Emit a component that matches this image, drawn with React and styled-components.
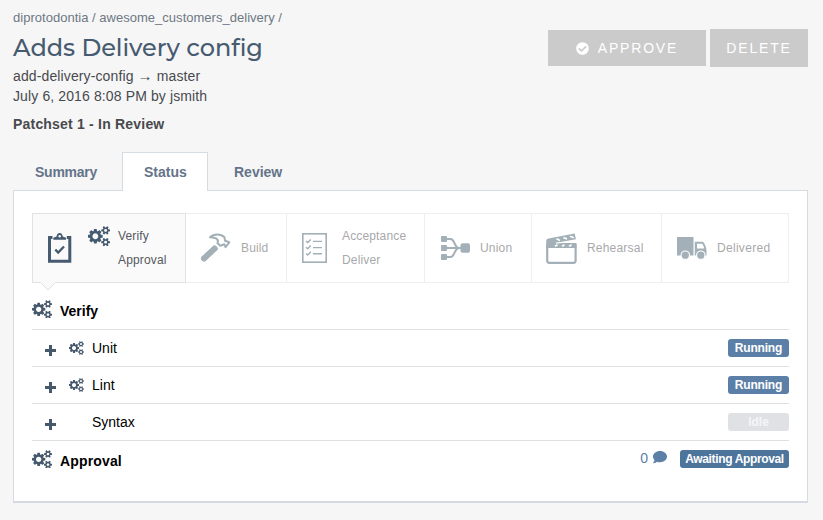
import React from "react";
import styled, { createGlobalStyle } from "styled-components";
import { FaCheckCircle, FaComment } from "react-icons/fa";

const GlobalStyle = createGlobalStyle`
  * { box-sizing: border-box; }
  body {
    margin: 0;
    background: #f6f6f6;
    color: #484a4e;
    font: 14px/20px "Liberation Sans", Arial, sans-serif;
  }
  svg { display: block; flex: none; }
`;

const Page = styled.div`
  width: 823px;
  height: 520px;
  padding: 8px 15px 0 13px;
  overflow: hidden;
`;

const Header = styled.header`
  display: flex;
  justify-content: space-between;
  align-items: flex-start;
  height: 144px;
`;

const Breadcrumb = styled.div`
  font-size: 13px;
  line-height: 19px;
  letter-spacing: 0.02px;
  color: #6e7884;
`;

const Title = styled.h1`
  margin: 6px 0 3px;
  font: 500 24px/30px Montserrat, Inter, sans-serif;
  letter-spacing: -0.05px;
  white-space: nowrap;
  color: #465a70;
`;

const Meta = styled.div`
  line-height: 20px;
  letter-spacing: 0.12px;
`;

const Arrow = styled.span`
  font: 15px/14px "Liberation Serif", serif;
`;

const Patchset = styled.div`
  margin-top: 8px;
  font-weight: bold;
  letter-spacing: 0.2px;
`;

const Actions = styled.div`
  display: flex;
  align-items: center;
  gap: 4px;
  margin-top: 21px;
`;

const Button = styled.button`
  display: flex;
  align-items: center;
  justify-content: center;
  gap: 9px;
  width: ${(p) => p.$width}px;
  height: ${(p) => p.$height}px;
  padding: 0;
  border: 0;
  background: #cbcbcb;
  color: #fff;
  font: 14px "Liberation Sans", Arial, sans-serif;
  letter-spacing: 1.8px;
`;

const Tabs = styled.nav`
  display: flex;
  position: relative;
  height: 39px;
  margin-bottom: -1px;
`;

const Tab = styled.a`
  display: flex;
  width: ${(p) => p.$width}px;
  padding: 9px 0 0 ${(p) => p.$inset || 21}px;
  border: 1px solid ${(p) => (p.$active ? "#d5dce2" : "transparent")};
  border-bottom: 0;
  background: ${(p) => (p.$active ? "#fff" : "transparent")};
  color: #64748a;
  font-weight: bold;
  letter-spacing: ${(p) => p.$spacing || 0}px;
`;

const Panel = styled.main`
  height: 313px;
  padding: 22px 18px 0;
  border: 1px solid #d5dce2;
  border-bottom: 2px solid #d5dae2;
  background: #fff;
`;

const Pipeline = styled.div`
  display: flex;
  height: 70px;
`;

const Stage = styled.div`
  position: relative;
  display: flex;
  align-items: center;
  width: ${(p) => p.$width}px;
  padding-left: ${(p) => p.$inset}px;
  border: 1px solid ${(p) => (p.$active ? "#dfe3e6" : "#eeeeef")};
  border-left-width: ${(p) => (p.$active ? 1 : 0)}px;
  background: ${(p) => (p.$active ? "#fafafa" : "#fff")};
  color: ${(p) => (p.$active ? "#465a70" : "#a3b0b8")};
`;

const Caret = styled.svg`
  position: absolute;
  left: 7px;
  top: 68px;
`;

const StageLabels = styled.div`
  margin-left: ${(p) => p.$gap}px;
  font-size: 12px;
  line-height: 24px;
  letter-spacing: ${(p) => p.$spacing || 0.15}px;
  color: ${(p) => (p.$active ? "#55585e" : "#a8a9ab")};
`;

const StageGears = styled.div`
  margin: 0 0 24px 16px;
`;

const Row = styled.div`
  display: flex;
  align-items: center;
  height: ${(p) => p.$height || 37}px;
  padding-left: ${(p) => (p.$heading ? 0 : 13)}px;
  border-bottom: 1px solid ${(p) => (p.$last ? "transparent" : "#dfe0e2")};
  color: #46586c;
`;

const IconSlot = styled.span`
  display: flex;
  width: ${(p) => p.$width}px;
  margin-top: ${(p) => p.$drop || 0}px;
`;

const RowName = styled.span`
  flex: 1;
  margin-top: ${(p) => p.$drop || 0}px;
  color: #000;
  font-weight: ${(p) => (p.$bold ? "bold" : "normal")};
  letter-spacing: ${(p) => p.$spacing || 0}px;
`;

const Comments = styled.span`
  display: flex;
  align-items: center;
  gap: 5px;
  margin: -2px 13px 0 0;
  color: #5c7fa7;
`;

const CommentBubble = styled(FaComment)`
  margin-top: -2px;
`;

const Badge = styled.span`
  width: ${(p) => p.$width}px;
  height: 18px;
  border-radius: 3px;
  background: ${(p) => p.$tone};
  color: ${(p) => p.$ink || "#fff"};
  font: bold 12px/18px "Liberation Sans", Arial, sans-serif;
  letter-spacing: ${(p) => p.$spacing}px;
  text-align: center;
  white-space: nowrap;
`;

const GearsIcon = ({ size }) => (
  <svg width={size} height={(size * 1792) / 1920} viewBox="0 0 1920 1792" fill="currentColor" fillRule="evenodd">
    <path d="M896 896q0-106-75-181t-181-75-181 75-75 181 75 181 181 75 181-75 75-181zm768 512q0-52-38-90t-90-38-90 38-38 90q0 53 37.500 90.500t90.500 37.500 90.500-37.500 37.500-90.500zm0-1024q0-52-38-90t-90-38-90 38-38 90q0 53 37.500 90.500t90.500 37.500 90.500-37.500 37.500-90.500zm-384 421v185q0 10-7 19.500t-16 10.500l-155 24q-11 35-32 76 34 48 90 115 7 11 7 20 0 12-7 19-23 30-82.500 89.500t-78.500 59.500q-11 0-21-7l-115-90q-37 19-77 31-11 108-23 155-7 24-30 24h-186q-11 0-20-7.500t-10-17.500l-23-153q-34-10-75-31l-118 89q-7 7-20 7-11 0-21-8-144-133-144-160 0-9 7-19 10-14 41-53t47-61q-23-44-35-82l-152-24q-10-1-17-9.500t-7-19.500v-185q0-10 7-19.500t16-10.500l155-24q11-35 32-76-34-48-90-115-7-11-7-20 0-12 7-20 22-30 82-89t79-59q11 0 21 7l115 90q34-18 77-32 11-108 23-154 7-24 30-24h186q11 0 20 7.500t10 17.500l23 153q34 10 75 31l118-89q8-7 20-7 11 0 21 8 144 133 144 160 0 8-7 19-12 16-42 54t-45 60q23 48 34 82l152 23q10 2 17 10.500t7 19.500zm640 533v140q0 16-149 31-12 27-30 52 51 113 51 138 0 4-4 7-122 71-124 71-8 0-46-47t-52-68q-20 2-30 2t-30-2q-14 21-52 68t-46 47q-2 0-124-71-4-3-4-7 0-25 51-138-18-25-30-52-149-15-149-31v-140q0-16 149-31 13-29 30-52-51-113-51-138 0-4 4-7 4-2 35-20t59-34 30-16q8 0 46 46.500t52 67.500q20-2 30-2t30 2q51-71 92-112l6-2q4 0 124 70 4 3 4 7 0 25-51 138 17 23 30 52 149 15 149 31zm0-1024v140q0 16-149 31-12 27-30 52 51 113 51 138 0 4-4 7-122 71-124 71-8 0-46-47t-52-68q-20 2-30 2t-30-2q-14 21-52 68t-46 47q-2 0-124-71-4-3-4-7 0-25 51-138-18-25-30-52-149-15-149-31v-140q0-16 149-31 13-29 30-52-51-113-51-138 0-4 4-7 4-2 35-20t59-34 30-16q8 0 46 46.500t52 67.500q20-2 30-2t30 2q51-71 92-112l6-2q4 0 124 70 4 3 4 7 0 25-51 138 17 23 30 52 149 15 149 31z" />
  </svg>
);

const PlusIcon = () => (
  <svg width="11" height="11" viewBox="0 0 11 11" fill="none" stroke="currentColor" strokeWidth="3">
    <path d="M5.500 0V11M0 5.500H11" />
  </svg>
);

const ClipboardIcon = () => (
  <svg width="24" height="30" viewBox="0 0 24 30" fill="none" stroke="currentColor">
    <path d="M4.500 4.600H1.500V28.300H21.800V4.600H18.800" strokeWidth="3" />
    <path d="M5.300 6.800V4.800L8.500 3.600C9 1 10 0 11.700 0S14.200 1 14.800 3.600L18 4.800V6.800Z" fill="currentColor" stroke="none" />
    <circle cx="11.700" cy="3.200" r="1.200" fill="#fafafa" stroke="none" />
    <path d="M7.300 16.700L10.200 19.500L16 13.500" strokeWidth="2.300" />
  </svg>
);

const HammerIcon = () => (
  <svg width="31" height="30" viewBox="0 0 31 30" fill="none" stroke="currentColor">
    <path d="M4 25.500L14.500 15.600" strokeWidth="6" strokeLinecap="round" />
    <path d="M13.500 12.800L17.400 16.600" strokeWidth="2.500" />
    <path d="M10 4.300C14 .4 21 .6 24.500 4.200L25 7.800L29.300 9.300L25.500 14.200L24.300 11.200L20.300 12.800L17.400 10.100C19 7.500 17.500 4.500 10 4.300Z" strokeWidth="2" strokeLinejoin="round" />
  </svg>
);

const ChecklistIcon = () => (
  <svg width="25" height="30" viewBox="0 0 25 30" fill="none" stroke="currentColor">
    <rect x=".8" y=".8" width="23.400" height="28.400" strokeWidth="1.600" />
    <path d="M4 8L5.700 9.600L8.800 6.400M4 14.200L5.700 15.800L8.800 12.600M4 20.400L5.700 22L8.800 18.800M11 8.400H20M11 14.600H20M11 20.800H20" strokeWidth="1.400" />
  </svg>
);

const MergeIcon = () => (
  <svg width="29" height="24" viewBox="0 0 29 24" fill="currentColor">
    <path d="M4 3H9.500C14 3 13 11 17.500 12H22M4 12H20M4 21H9.500C14 21 13 13 17.500 12" fill="none" stroke="currentColor" strokeWidth="2" />
    <rect width="6" height="6" rx=".8" />
    <rect y="9" width="6" height="6" rx=".8" />
    <rect y="18" width="6" height="6" rx=".8" />
    <rect x="19.500" y="7.200" width="9.500" height="9.600" rx="2" />
  </svg>
);

const ClapperIcon = () => (
  <svg width="31" height="31" viewBox="0 0 31 31" fill="none" stroke="currentColor">
    <rect x="1.200" y="11" width="28.400" height="18.800" rx="2" strokeWidth="2.200" />
    <path d="M.2 10H30.500V15H.2ZM.2 8Q.2 5.800 2.500 5.400L28.700.4L29.900 6.300L9 10H.2Z" fill="currentColor" stroke="none" />
    <path d="M10.500 5.800L14 7.400M17.500 4.500L21 6.100M24 3.200L27.800 4.700M9 13.400L11.500 11.700M16 13.400L18.500 11.700M23 13.400L25.500 11.700" stroke="#fff" strokeWidth="1.700" />
    <path d="M10 10.100L30.500 8.400" stroke="#fff" strokeWidth="1" />
  </svg>
);

const TruckIcon = () => (
  <svg width="30" height="23" viewBox="0 0 30 23" fill="currentColor">
    <path d="M0 0H16.500V18.500H0Z" />
    <path fillRule="evenodd" d="M17.800 4.700H26C28 6.500 29 10 29.500 13V18.500H17.800ZM20 6.700V11.400H27.200C26.800 9.500 26 7.600 25 6.700Z" />
    <circle cx="8.300" cy="18.200" r="4.200" stroke="#fff" strokeWidth="1.100" />
    <circle cx="23.800" cy="18.200" r="4.200" stroke="#fff" strokeWidth="1.100" />
  </svg>
);

const stages = [
  { width: 101, inset: 14, gap: 10, icon: <HammerIcon />, labels: ["Build"] },
  { width: 138, inset: 15, gap: 15, icon: <ChecklistIcon />, labels: ["Acceptance", "Deliver"] },
  { width: 107, inset: 16, gap: 10, icon: <MergeIcon />, labels: ["Union"], spacing: 0.2 },
  { width: 130, inset: 14, gap: 10, icon: <ClapperIcon />, labels: ["Rehearsal"], spacing: 0.2 },
  { width: 127, inset: 15, gap: 10, icon: <TruckIcon />, labels: ["Delivered"], spacing: 0.3 },
];

const phases = [
  { name: "Unit", status: "Running" },
  { name: "Lint", status: "Running" },
  { name: "Syntax", status: "Idle" },
];

export default function App() {
  return (
    <Page>
      <GlobalStyle />
      <Header>
        <div>
          <Breadcrumb>diprotodontia / awesome_customers_delivery /</Breadcrumb>
          <Title>Adds Delivery config</Title>
          <Meta>add-delivery-config <Arrow>→</Arrow> master</Meta>
          <Meta>July 6, 2016 8:08 PM by jsmith</Meta>
          <Patchset>Patchset 1 - In Review</Patchset>
        </div>
        <Actions>
          <Button $width={158} $height={36}>
            <FaCheckCircle size={13} />
            APPROVE
          </Button>
          <Button $width={98} $height={38}>DELETE</Button>
        </Actions>
      </Header>
      <Tabs>
        <Tab $width={109} $spacing={-0.25}>Summary</Tab>
        <Tab $width={86} $active>Status</Tab>
        <Tab $width={101} $inset={25}>Review</Tab>
      </Tabs>
      <Panel>
        <Pipeline>
          <Stage $width={154} $inset={15} $active>
            <ClipboardIcon />
            <StageGears><GearsIcon size={22} /></StageGears>
            <StageLabels $gap={8} $active>
              <div>Verify</div>
              <div>Approval</div>
            </StageLabels>
            <Caret width="16" height="9" viewBox="0 0 16 9">
              <path d="M0 0H16L8 8Z" fill="#fafafa" />
              <path d="M.5 .5L8 8L15.500 .5" fill="none" stroke="#dfe3e6" />
            </Caret>
          </Stage>
          {stages.map((s) => (
            <Stage key={s.labels[0]} $width={s.width} $inset={s.inset}>
              {s.icon}
              <StageLabels $gap={s.gap} $spacing={s.spacing}>
                {s.labels.map((l) => <div key={l}>{l}</div>)}
              </StageLabels>
            </Stage>
          ))}
        </Pipeline>
        <Row $heading $height={47}>
          <IconSlot $width={28} $drop={6}><GearsIcon size={20} /></IconSlot>
          <RowName $bold $drop={9}>Verify</RowName>
        </Row>
        {phases.map((p) => (
          <Row key={p.name}>
            <IconSlot $width={24} $drop={5}><PlusIcon /></IconSlot>
            <IconSlot $width={23}>{p.status === "Running" && <GearsIcon size={15} />}</IconSlot>
            <RowName>{p.name}</RowName>
            {p.status === "Running"
              ? <Badge $width={61} $tone="#5c7fa7" $spacing={-0.2}>Running</Badge>
              : <Badge $width={61} $tone="#e0e1e5" $ink="#f5f5f7" $spacing={0}>Idle</Badge>}
          </Row>
        ))}
        <Row $heading $last>
          <IconSlot $width={28}><GearsIcon size={20} /></IconSlot>
          <RowName $bold $drop={4} $spacing={0.15}>Approval</RowName>
          <Comments>0 <CommentBubble size={14} /></Comments>
          <Badge $width={109} $tone="#4d749b" $spacing={-0.35}>Awaiting Approval</Badge>
        </Row>
      </Panel>
    </Page>
  );
}
